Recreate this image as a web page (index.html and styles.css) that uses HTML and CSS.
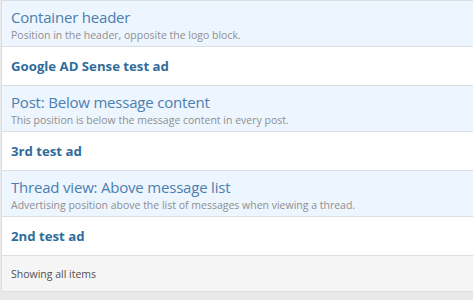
FILE: index.html
```html
<!DOCTYPE html>
<html lang="en">
<head>
  <meta charset="UTF-8">
  <title>Advertising</title>
  <link rel="stylesheet" href="styles.css">
</head>
<body>
  <div class="block">
    <div class="block-body">
      <h3 class="group-header">
        <a href="#">Container header</a>
        <span class="group-desc">Position in the header, opposite the logo block.</span>
      </h3>
      <div class="row"><a href="#">Google AD Sense test ad</a></div>

      <h3 class="group-header">
        <a href="#">Post: Below message content</a>
        <span class="group-desc">This position is below the message content in every post.</span>
      </h3>
      <div class="row"><a href="#">3rd test ad</a></div>

      <h3 class="group-header">
        <a href="#">Thread view: Above message list</a>
        <span class="group-desc">Advertising position above the list of messages when viewing a thread.</span>
      </h3>
      <div class="row"><a href="#">2nd test ad</a></div>
    </div>
    <div class="block-footer">Showing all items</div>
  </div>
</body>
</html>
```

FILE: styles.css
```css
:root {
  --border-color: #dbdee2;
  --header-bg: #edf5fe;
  --title-color: #4b7faf;
  --link-color: #2f6c9c;
  --muted: #8f8f8f;
}

body {
  font-family: 'Open Sans', 'Segoe UI', sans-serif;
  background: #e9e9e9;
  margin: 0;
  padding: 0 0 0 1px;
}

.block {
  border: 1px solid var(--border-color);
  border-right: none;
  background: #fff;
}

.group-header {
  margin: 0;
  height: 46px;
  box-sizing: border-box;
  padding: 6px 9px 0;
  background: var(--header-bg);
  border-bottom: 1px solid var(--border-color);
  font-weight: normal;
}

.group-header a {
  display: block;
  font-size: 15px;
  letter-spacing: -0.2px;
  line-height: 21px;
  color: var(--title-color);
  text-decoration: none;
}

.group-desc {
  display: block;
  font-size: 10.5px;
  line-height: 14px;
  color: var(--muted);
}

.row {
  height: 39px;
  box-sizing: border-box;
  padding: 0 9px;
  display: flex;
  align-items: center;
  border-bottom: 1px solid var(--border-color);
}

.row a {
  font-size: 13.2px;
  font-weight: bold;
  color: var(--link-color);
  text-decoration: none;
}

.block-footer {
  height: 35px;
  box-sizing: border-box;
  padding: 0 9px;
  display: flex;
  align-items: center;
  background: #f5f5f5;
  font-size: 10.5px;
  color: #505050;
}
```
